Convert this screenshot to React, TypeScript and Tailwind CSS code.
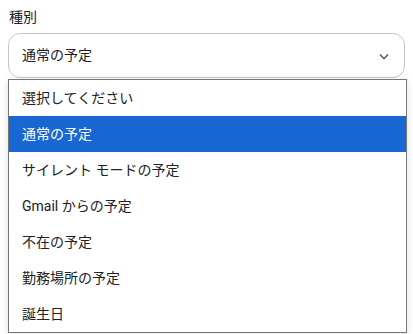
import React from "react";

const options = [
  "選択してください",
  "通常の予定",
  "サイレント モードの予定",
  "Gmail からの予定",
  "不在の予定",
  "勤務場所の予定",
  "誕生日",
];

function App() {
  const selected = 1;
  return (
    <div className="h-[334px] w-[413px] overflow-hidden bg-white font-['Roboto','Noto_Sans_CJK_JP',sans-serif] text-[14px] text-[#202124]">
      <div className="px-[9px] pt-[7px] leading-[20px]">種別</div>
      <div className="relative mx-[8px] mt-[6px]">
        <div className="flex h-[45px] items-center justify-between rounded-[12px] border border-[#c4c7c5] pl-[13px] pr-[14px]">
          <span>通常の予定</span>
          <svg width="12" height="12" viewBox="0 0 12 12" className="text-[#5f6368]">
            <path d="M2 4.5 L6 8.5 L10 4.5" fill="none" stroke="currentColor" strokeWidth="1.6" />
          </svg>
        </div>
        <div className="absolute right-[-1px] top-[127px] h-[34px] w-[2px] bg-[#e0e0e0]" />
        <ul className="absolute left-0 top-[46px] w-[399px] border border-[#767676] bg-white shadow-[0_2px_8px_rgba(0,0,0,0.12)]">
          {options.map((o, i) => (
            <li
              key={o}
              className={`flex h-[36px] items-center pl-[13px] ${
                i === selected ? "bg-[#1967d2] text-white" : ""
              }`}
            >
              {o}
            </li>
          ))}
        </ul>
      </div>
    </div>
  );
}

export default App;
